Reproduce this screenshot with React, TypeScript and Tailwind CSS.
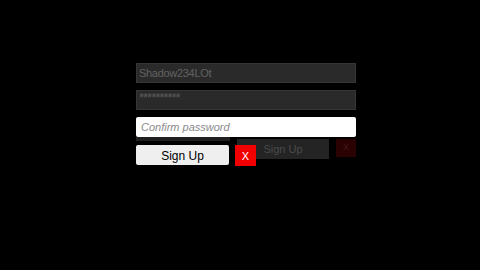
export default function App() {
  return (
    <div className="w-[480px] h-[270px] bg-black pt-[63px] pl-[136px] font-['Liberation_Sans',Arial,sans-serif]">
      <div className="w-[220px] flex flex-col gap-[7px]">
        {/* Username */}
        <div className="h-[20px] bg-[#2a2a2a] border border-[#363636] flex items-center px-[2px] text-[11px] text-[#626262] tracking-[-0.3px]">
          Shadow234LOt
        </div>
        {/* Password */}
        <div className="h-[20px] bg-[#2a2a2a] border border-[#363636] flex items-start px-[2px] text-[13px] leading-[14px] text-[#5a5a5a] tracking-[-1px]">
          **********
        </div>
        {/* Confirm password */}
        <div className="h-[20px] bg-white rounded-[2px] flex items-center px-[5px] text-[11px] italic text-[#8a8a8a]">
          Confirm password
        </div>
      </div>

      <div className="w-[94px] h-[4px] bg-[#202020]" />

      {/* Buttons */}
      <div className="relative w-[220px] mt-[4px]">
        {/* faded overlay from the previous frame */}
        <div className="absolute left-[101px] top-[-6px] flex items-start gap-[7px]">
          <div className="w-[92px] h-[20px] bg-[#242424] flex items-center justify-center text-[11px] text-[#4a4a4a]">
            Sign Up
          </div>
          <div className="w-[20px] h-[18px] bg-[#2a0202] flex items-center justify-center text-[9px] text-[#4a1a1a]">
            X
          </div>
        </div>

        <div className="relative flex items-start gap-[6px]">
          <button className="w-[93px] h-[20px] bg-[#efefef] rounded-[2px] flex items-center justify-center pt-[2px] text-[12px] text-black">
            Sign Up
          </button>
          <button className="w-[21px] h-[21px] bg-[#f20000] flex items-center justify-center pt-[1px] text-[11px] text-white">
            X
          </button>
        </div>
      </div>
    </div>
  );
}
